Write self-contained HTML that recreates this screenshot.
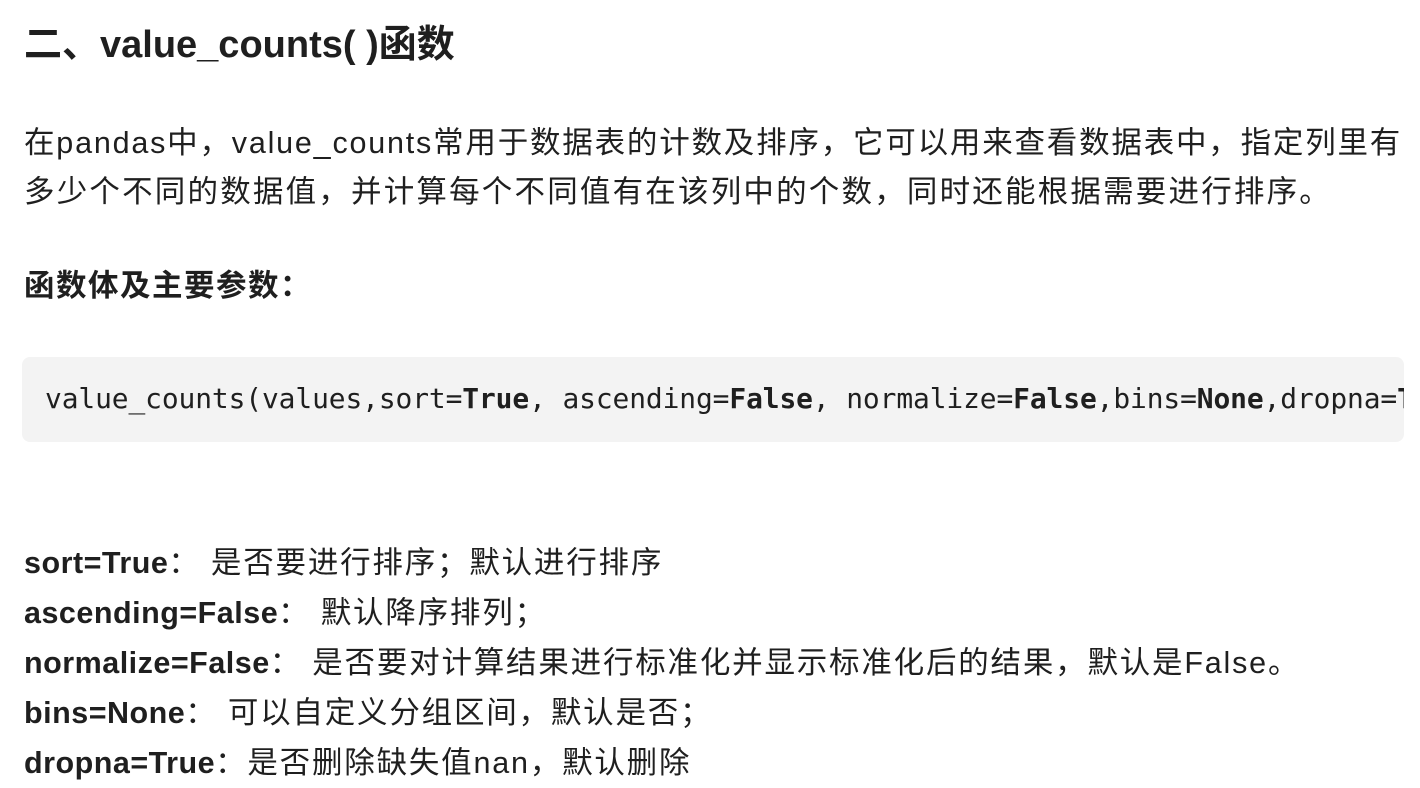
<!DOCTYPE html>
<html><head><meta charset="utf-8"><style>
body{margin:0;width:1420px;height:786px;overflow:hidden;background:#fff;color:#1f1f1f;font-family:"Liberation Sans","Noto Sans CJK SC",sans-serif;}
.h{position:absolute;left:24px;top:20px;font-size:38px;font-weight:bold;line-height:50px;white-space:nowrap;}
.p{position:absolute;left:24px;top:119px;font-size:30.5px;letter-spacing:1.8px;line-height:49px;white-space:nowrap;}
.p2{letter-spacing:2.2px;}
.b{position:absolute;left:24px;top:266px;font-size:30.5px;letter-spacing:1.5px;font-weight:bold;line-height:40px;}
.code{position:absolute;left:22px;top:357px;width:1382px;height:85px;background:#f3f3f3;border-radius:8px;overflow:hidden;}
.code pre{margin:0;position:absolute;left:23px;top:22px;font-family:"DejaVu Sans Mono","Liberation Mono",monospace;font-size:27.9px;letter-spacing:-0.1px;line-height:40px;white-space:pre;color:#1f1f1f;}
.list{position:absolute;left:24px;top:538px;font-size:30.5px;letter-spacing:1.8px;line-height:50px;white-space:nowrap;}
.list b{font-weight:bold;letter-spacing:0.5px;}
</style></head><body>
<div class="h">二、value_counts( )函数</div>
<div class="p">在pandas中，value_counts常用于数据表的计数及排序，它可以用来查看数据表中，指定列里有<br><span class="p2">多少个不同的数据值，并计算每个不同值有在该列中的个数，同时还能根据需要进行排序。</span></div>
<div class="b">函数体及主要参数：</div>
<div class="code"><pre>value_counts(values,sort=<b>True</b>, ascending=<b>False</b>, normalize=<b>False</b>,bins=<b>None</b>,dropna=<b>True</b>)</pre></div>
<div class="list">
<b>sort=True</b>： 是否要进行排序；默认进行排序<br>
<b>ascending=False</b>： 默认降序排列；<br>
<b>normalize=False</b>： 是否要对计算结果进行标准化并显示标准化后的结果，默认是False。<br>
<b>bins=None</b>： 可以自定义分组区间，默认是否；<br>
<b>dropna=True</b>：是否删除缺失值nan，默认删除
</div>
</body></html>
